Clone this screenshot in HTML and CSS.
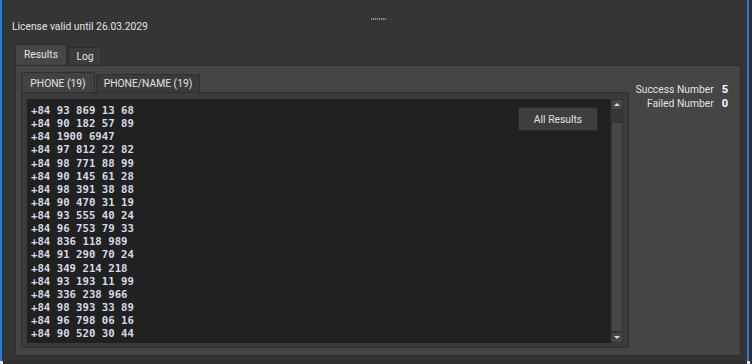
FILE: index.html
```html
<!DOCTYPE html>
<html lang="en">
<head>
    <meta charset="UTF-8">
    <title>Results</title>
    <link rel="stylesheet" href="styles.css">
</head>
<body>
    <div class="window">
        <div class="grip"></div>
        <div class="license">License valid until 26.03.2029</div>

        <div class="tabbar">
            <div class="tab active">Results</div>
            <div class="tab log">Log</div>
        </div>

        <div class="pane">
            <div class="results">
                <div class="subtabbar">
                    <div class="subtab active">PHONE (19)</div>
                    <div class="subtab names">PHONE/NAME (19)</div>
                </div>
                <div class="subpane">
                    <div class="listbox">
                        <div class="list">
                            <div>+84 93 869 13 68</div>
                            <div>+84 90 182 57 89</div>
                            <div>+84 1900 6947</div>
                            <div>+84 97 812 22 82</div>
                            <div>+84 98 771 88 99</div>
                            <div>+84 90 145 61 28</div>
                            <div>+84 98 391 38 88</div>
                            <div>+84 90 470 31 19</div>
                            <div>+84 93 555 40 24</div>
                            <div>+84 96 753 79 33</div>
                            <div>+84 836 118 989</div>
                            <div>+84 91 290 70 24</div>
                            <div>+84 349 214 218</div>
                            <div>+84 93 193 11 99</div>
                            <div>+84 336 238 966</div>
                            <div>+84 98 393 33 89</div>
                            <div>+84 96 798 06 16</div>
                            <div>+84 90 520 30 44</div>
                        </div>
                        <button class="all-btn">All Results</button>
                        <div class="scrollbar">
                            <div class="sb-btn up"><span></span></div>
                            <div class="sb-track"></div>
                            <div class="sb-handle"></div>
                            <div class="sb-btn down"><span></span></div>
                        </div>
                    </div>
                </div>
            </div>

            <div class="stats">
                <span class="label">Success Number</span><span class="value">5</span>
                <span class="label">Failed Number</span><span class="value">0</span>
            </div>
        </div>
    </div>
    <div class="footer">
        <span class="corner"></span>
        <span class="corner"></span>
    </div>
</body>
</html>
```

FILE: styles.css
```css
body {
    margin: 0;
    background: #2e2e2e;
    font-family: Roboto, "Noto Sans", sans-serif;
    font-size: 10.3px;
    color: #e2e2e2;
    width: 752px;
    height: 364px;
    overflow: hidden;
}
.window {
    box-sizing: border-box;
    width: 749px;
    height: 361px;
    background: #353535;
    border-left: 2px solid #2f7bd2;
    border-right: 2px solid #2f7bd2;
    padding: 18px 6px 0 11px;
    display: flex;
    flex-direction: column;
}
.grip {
    width: 15px;
    height: 2px;
    margin: 0 0 0 358px;
    background: repeating-linear-gradient(90deg, #8a8a8a 0 1px, #4a4a4a 1px 2px);
}
.license {
    height: 12px;
    line-height: 14px;
    margin-left: -1px;
    margin-bottom: 12px;
    white-space: nowrap;
}

/* outer tabs */
.tabbar {
    display: flex;
    align-items: flex-end;
    height: 21px;
    margin-left: 2px;
}
.tab {
    box-sizing: border-box;
    height: 18px;
    line-height: 18px;
    text-align: center;
    background: #3b3b3b;
    border: 1px solid #2c2c2c;
    border-bottom: none;
    border-radius: 2px 2px 0 0;
    margin-right: 1px;
    white-space: nowrap;
}
.tab.active {
    height: 21px;
    line-height: 19px;
    width: 52px;
    background: #464646;
}
.tab.log {
    width: 34px;
}
.pane {
    box-sizing: border-box;
    height: 291px;
    margin-left: 2px;
    background: #454545;
    border: 1px solid #2e2e2e;
    padding: 6px 0 0 5px;
    display: flex;
}

/* inner tabs */
.results {
    width: 608px;
    display: flex;
    flex-direction: column;
}
.subtabbar {
    display: flex;
    align-items: flex-end;
    height: 20px;
}
.subtab {
    box-sizing: border-box;
    height: 18px;
    line-height: 18px;
    text-align: center;
    background: #3b3b3b;
    border: 1px solid #2f2f2f;
    border-bottom: none;
    border-radius: 2px 2px 0 0;
    margin-right: 1px;
    white-space: nowrap;
}
.subtab.active {
    height: 20px;
    line-height: 21px;
    width: 74px;
    background: #424242;
}
.subtab.names {
    width: 104px;
}
.subpane {
    box-sizing: border-box;
    height: 256px;
    background: #3b3b3b;
    border: 1px solid #2f2f2f;
    padding: 6px 5px 4px 5px;
}
.listbox {
    position: relative;
    height: 244px;
    background: #212121;
    display: flex;
    overflow: hidden;
}
.list {
    flex: 1;
    padding: 5px 4px 0;
    font-family: "DejaVu Sans Mono", monospace;
    font-weight: bold;
    font-size: 10.7px;
    line-height: 13.12px;
    color: #d6dae5;
    white-space: nowrap;
}
.all-btn {
    position: absolute;
    top: 8px;
    right: 25px;
    width: 80px;
    height: 24px;
    background: #3e3e3e;
    border: 1px solid #2a2a2a;
    border-radius: 2px;
    color: #e2e2e2;
    font-family: Roboto, "Noto Sans", sans-serif;
    font-size: 10.3px;
    padding: 0;
}

/* scrollbar */
.scrollbar {
    width: 12px;
    display: flex;
    flex-direction: column;
    background: #3a3a3a;
    border-left: 1px solid #2a2a2a;
}
.sb-btn {
    height: 11px;
    background: #464646;
    border: 1px solid #333;
    box-sizing: border-box;
    display: flex;
    align-items: center;
    justify-content: center;
}
.sb-btn span {
    width: 0;
    height: 0;
    border-left: 3px solid transparent;
    border-right: 3px solid transparent;
}
.sb-btn.up span {
    border-bottom: 3px solid #d8d8d8;
}
.sb-btn.down span {
    border-top: 3px solid #d8d8d8;
}
.sb-track {
    height: 12px;
    background: repeating-conic-gradient(#3a3a3a 0 25%, #333 0 50%) 0 0 / 2px 2px;
}
.sb-handle {
    flex: 1;
    background: #474747;
    border: 1px solid #333;
}

/* right column */
.stats {
    flex: 1;
    display: grid;
    grid-template-columns: 1fr auto;
    column-gap: 8px;
    align-content: start;
    padding: 11px 12px 0 0;
    line-height: 14px;
    white-space: nowrap;
}
.label {
    text-align: right;
}
.value {
    font-weight: bold;
    color: #fff;
    font-size: 11px;
}

.footer {
    height: 3px;
    width: 750px;
    display: flex;
    justify-content: space-between;
}
.corner {
    width: 3px;
    height: 3px;
    background: #e8e8e8;
}
```
